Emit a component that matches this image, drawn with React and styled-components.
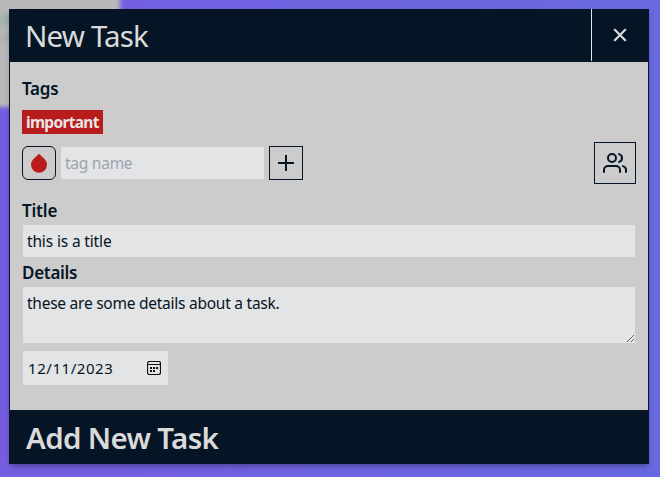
import React from "react";
import styled, { createGlobalStyle } from "styled-components";
import { FiUsers } from "react-icons/fi";

const ink = "#051525";
const field = "#e3e4e6";

const GlobalStyle = createGlobalStyle`
  *, *::before, *::after { box-sizing: border-box; }
  body {
    margin: 0;
    font-family: "Noto Sans", "Open Sans", sans-serif;
    font-size: 16px;
    color: ${ink};
  }
  button, input, textarea { font: inherit; color: inherit; margin: 0; }
`;

const Page = styled.main`
  position: relative;
  height: 477px;
  padding: 9px 11px 13px 9px;
  overflow: hidden;
  background: linear-gradient(90deg, #745de0, #6969df);
`;

const BackdropCard = styled.div`
  position: absolute;
  left: -20px;
  top: -20px;
  width: 140px;
  height: 127px;
  background: #b9b9b9;
  filter: blur(2px);
`;

const BackdropLine = styled.div`
  position: absolute;
  left: 0;
  top: ${(p) => p.$top}px;
  width: 29px;
  height: ${(p) => p.$height}px;
  background: ${(p) => p.$color};
  filter: blur(3px);
`;

const Dialog = styled.section`
  position: relative;
  display: flex;
  flex-direction: column;
  height: 455px;
  border: 1px solid ${ink};
  background: #ccc;
  box-shadow: 0 4px 6px -1px rgba(0, 0, 0, 0.2), 0 2px 4px -2px rgba(0, 0, 0, 0.2);
`;

const Header = styled.header`
  display: flex;
  flex: none;
  height: 53px;
  margin-top: -1px;
  border-bottom: 1px solid ${ink};
  background: ${ink};
  color: #dadada;
`;

const Heading = styled.h1`
  flex: 1;
  margin: 0;
  padding-left: 15px;
  font-size: 29.5px;
  line-height: 54px;
  font-weight: 400;
  letter-spacing: -0.85px;
`;

const CloseButton = styled.button`
  display: grid;
  place-items: center;
  width: 57px;
  padding: 0;
  border: 0;
  border-left: 1px solid #e3e4e6;
  background: none;
`;

const Body = styled.div`
  display: flex;
  flex-direction: column;
  flex: 1;
  padding: 13px 12px 0;
`;

const Label = styled.label`
  height: ${(p) => p.$height}px;
  font-size: 17px;
  line-height: ${(p) => p.$line || 28}px;
  font-weight: 600;
  letter-spacing: ${(p) => p.$spacing || 0}px;
`;

const Tag = styled.span`
  align-self: flex-start;
  width: 81px;
  height: 24px;
  margin-top: 7px;
  padding-left: 4px;
  background: #b91c1c;
  color: #e8e4e4;
  font-size: 15.5px;
  line-height: 24px;
  font-weight: 700;
  letter-spacing: -0.7px;
`;

const TagRow = styled.div`
  display: flex;
  align-items: center;
  gap: 5px;
  height: 42px;
  margin: 8px 0 13px;
`;

const IconButton = styled.button`
  display: grid;
  place-items: center;
  width: ${(p) => p.$size || 34}px;
  height: ${(p) => p.$size || 34}px;
  padding: 0;
  border: 1px solid ${ink};
  border-radius: ${(p) => p.$radius || 0}px;
  background: none;
  margin-left: ${(p) => (p.$end ? "auto" : 0)};
`;

const TextInput = styled.input`
  width: ${(p) => p.$width || 612}px;
  height: 32px;
  margin-left: ${(p) => p.$offset || 0}px;
  padding: 0 4px;
  border: 0;
  border-radius: 0;
  outline: 0;
  background: ${field};
  font-size: 15.5px;
  letter-spacing: ${(p) => p.$spacing || 0}px;
  &::placeholder { color: #9ca3af; opacity: 1; }
`;

const Details = styled.textarea`
  display: block;
  width: 612px;
  height: 56px;
  margin: 0 0 8px 1px;
  padding: 4px;
  border: 0;
  outline: 0;
  background: ${field};
  font-size: 15.5px;
  line-height: 24px;
  letter-spacing: -0.25px;
`;

const DateField = styled.div`
  display: flex;
  align-items: center;
  justify-content: space-between;
  width: 145px;
  height: 34px;
  margin-left: 1px;
  padding: 0 7px 0 5px;
  background: ${field};
  font-size: 15px;
  letter-spacing: 0.55px;
`;

const SubmitButton = styled.button`
  flex: none;
  height: 53px;
  padding: 3px 0 0 16px;
  border: 0;
  background: ${ink};
  color: #dadada;
  text-align: left;
  font-size: 29.5px;
  line-height: 50px;
  font-weight: 600;
  letter-spacing: -0.67px;
`;

const CloseIcon = () => (
  <svg width="14" height="14" viewBox="0 0 14 14" fill="none" stroke="#dadada" strokeWidth="2.2" strokeLinecap="round">
    <path d="M1.8 1.8 12.2 12.2M12.2 1.8 1.8 12.2" />
  </svg>
);

const DropIcon = () => (
  <svg width="18" height="20" viewBox="0 0 18 20" fill="#b91c1c">
    <path d="M9 .8 14.8 6.2A8 8 0 1 1 3.2 6.2Z" />
  </svg>
);

const PlusIcon = () => (
  <svg width="16" height="16" viewBox="0 0 16 16" fill="none" stroke={ink} strokeWidth="2">
    <path d="M8 0v16M0 8h16" />
  </svg>
);

const CalendarIcon = () => (
  <svg width="14" height="14" viewBox="0 0 14 14" fill="none" stroke="#111">
    <rect x=".5" y=".5" width="13" height="13" rx="2" strokeWidth="1.2" />
    <path d="M0 3.5h14" />
    <path d="M3 7h8M3 10h5" strokeWidth="2" strokeDasharray="2 1" />
  </svg>
);

export default function App() {
  return (
    <Page>
      <GlobalStyle />
      <BackdropCard />
      <BackdropLine $top={14} $height={12} $color="#9caead" />
      <BackdropLine $top={35} $height={6} $color="#a6a6a8" />
      <Dialog>
        <Header>
          <Heading>New Task</Heading>
          <CloseButton aria-label="Close"><CloseIcon /></CloseButton>
        </Header>
        <Body>
          <Label as="div" $height={28} $spacing={-0.25}>Tags</Label>
          <Tag>important</Tag>
          <TagRow>
            <IconButton $radius={6} aria-label="Tag color"><DropIcon /></IconButton>
            <TextInput $width={203} $spacing={-0.25} placeholder="tag name" aria-label="Tag name" />
            <IconButton aria-label="Add tag"><PlusIcon /></IconButton>
            <IconButton $size={42} $end aria-label="Assign people"><FiUsers size={24} /></IconButton>
          </TagRow>
          <Label htmlFor="title" $height={28} $spacing={-0.2}>Title</Label>
          <TextInput id="title" $offset={1} $spacing={-0.15} defaultValue="this is a title" />
          <Label htmlFor="details" $height={30} $line={32} $spacing={-0.3}>Details</Label>
          <Details id="details" defaultValue="these are some details about a task." />
          <DateField>12/11/2023<CalendarIcon /></DateField>
        </Body>
        <SubmitButton>Add New Task</SubmitButton>
      </Dialog>
    </Page>
  );
}
